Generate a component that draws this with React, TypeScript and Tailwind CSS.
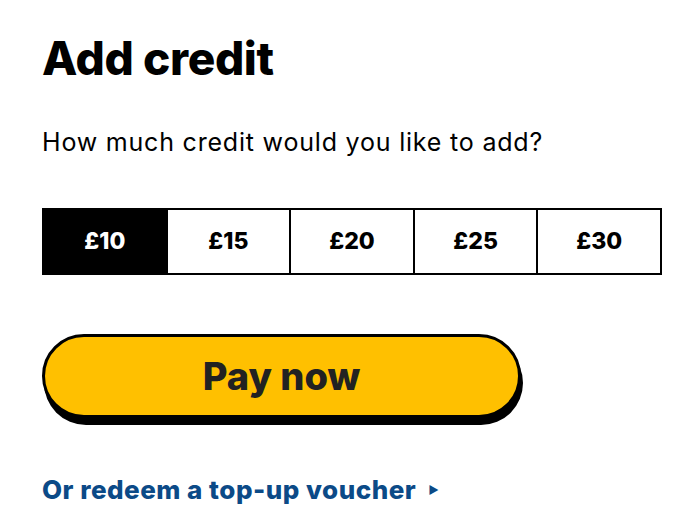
const amounts = ["£10", "£15", "£20", "£25", "£30"];

export default function App() {
  const selected = 0;

  return (
    <div className="min-h-screen bg-white pl-[42px] pt-[30px] font-['Inter',sans-serif] text-black">
      <h1 className="text-[46px] font-extrabold leading-[56px] tracking-[-0.4px]">Add credit</h1>

      <p className="mt-[40px] text-[25px] leading-[32px] tracking-[0.8px]">How much credit would you like to add?</p>

      <div className="mt-[50px] flex h-[67px] w-[620px] border-2 border-black">
        {amounts.map((a, i) => (
          <button
            key={a}
            className={
              "flex flex-1 items-center justify-center text-[23px] font-extrabold " +
              (i > 0 ? "border-l-2 border-black " : "") +
              (i === selected ? "bg-black text-white" : "bg-white text-black")
            }
          >
            {a}
          </button>
        ))}
      </div>

      <button className="mt-[59px] flex h-[84px] w-[479px] items-center justify-center rounded-full border-[3px] border-black bg-[#ffc000] text-[38px] font-extrabold text-[#222] shadow-[2px_7px_0_0_#000]">
        Pay now
      </button>

      <a href="#" className="mt-[56px] flex items-center gap-3 text-[26px] font-extrabold leading-[32px] tracking-[0.5px] text-[#0b4a87]">
        Or redeem a top-up voucher
        <span className="text-[11px] text-[#0b4a87]">▶</span>
      </a>
    </div>
  );
}
